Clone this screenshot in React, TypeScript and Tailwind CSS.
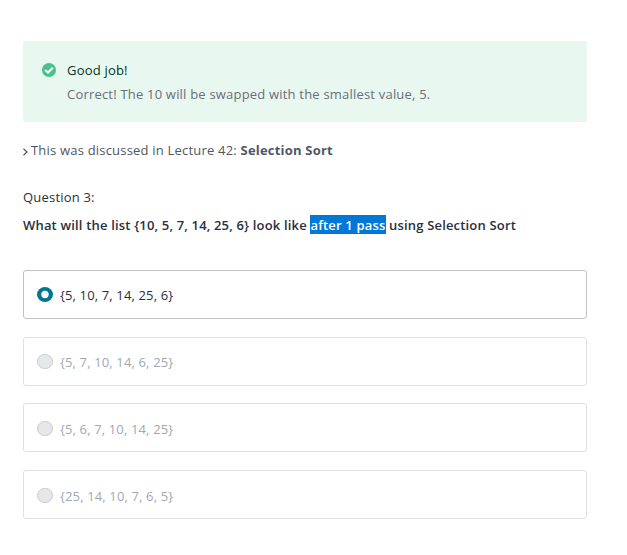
const options = [
  { text: '{5, 10, 7, 14, 25, 6}', selected: true, nudge: 'pt-px' },
  { text: '{5, 7, 10, 14, 6, 25}', selected: false, nudge: 'pt-px' },
  { text: '{5, 6, 7, 10, 14, 25}', selected: false, nudge: 'pt-[3px]' },
  { text: '{25, 14, 10, 7, 6, 5}', selected: false, nudge: 'pt-[3px]' },
];

function Option({ text, selected, nudge }: { text: string; selected: boolean; nudge: string }) {
  return (
    <label
      className={
        'flex h-[49px] items-center gap-[7px] rounded-[3px] border pl-[13px] ' + nudge + ' ' +
        (selected ? 'border-[#c1c2c4] text-[#29303b]' : 'border-[#dedfe0] text-[#a1a7b3]')
      }
    >
      {selected ? (
        <svg className="mb-px h-[15px] w-4" viewBox="0 0 16 15">
          <ellipse cx="8" cy="7.5" rx="8" ry="7.5" fill="#007791" />
          <circle cx="8" cy="7.5" r="3.7" fill="white" />
        </svg>
      ) : (
        <span className="mb-px h-[15px] w-4 rounded-full border border-[#cacbcc] bg-[#e6e7e9]" />
      )}
      <span className="tracking-[0.14px]">{text}</span>
    </label>
  );
}

export default function App() {
  return (
    <main className="h-[555px] bg-white pl-[23px] pr-10 pt-[41px] font-['Open_Sans',sans-serif] text-[13px] leading-6 tracking-[0.2px] text-[#29303b]">
      <section className="flex h-[81px] rounded-[2px] bg-[#e8f7f0] pl-[19px] pt-[17px]">
        <svg className="mt-[5px] size-[14px]" viewBox="0 0 14 14">
          <circle cx="7" cy="7" r="7" fill="#46c28e" />
          <path d="M3.1 6.9L6 9.6L10.8 4.8" fill="none" stroke="white" strokeWidth="2.1" />
        </svg>
        <div className="ml-[11px]">
          <p className="text-[#00352a]">Good job!</p>
          <p className="text-[#686f7a]">Correct! The 10 will be swapped with the smallest value, 5.</p>
        </div>
      </section>
      <p className="mt-4 flex items-center text-[#505763]">
        <svg className="mr-[3px] mt-1 h-2 w-[5px]" viewBox="0 0 5 8">
          <path d="M.5 .8L4 4L.5 7.2" fill="none" stroke="currentColor" strokeWidth="1.2" />
        </svg>
        <span>This was discussed in Lecture 42: <b className="font-bold">Selection Sort</b></span>
      </p>
      <p className="mt-[23px]">Question 3:</p>
      <h1 className="mt-1 font-semibold tracking-[0.174px]">
        What will the list {'{10, 5, 7, 14, 25, 6}'} look like{' '}
        <span className="bg-[#0078d7] pt-px text-white">after 1 pass</span> using Selection Sort
      </h1>
      <div className="mt-[33px] flex flex-col gap-[17.7px]">
        {options.map((o) => <Option key={o.text} {...o} />)}
      </div>
    </main>
  );
}
